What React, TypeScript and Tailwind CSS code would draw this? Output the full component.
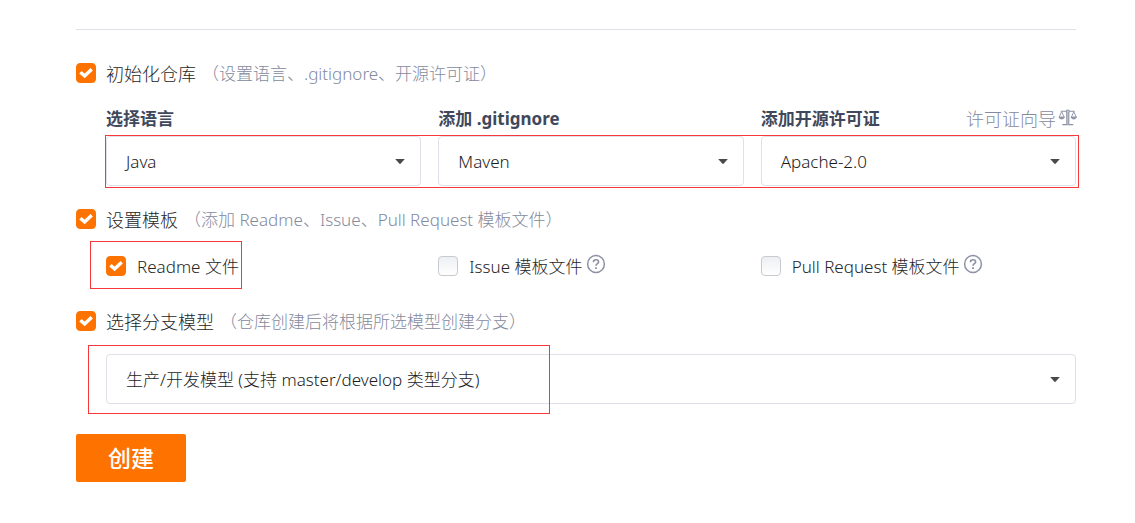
import type { ReactNode } from "react";

function Check({ id, checked = false }: { id: string; checked?: boolean }) {
  return (
    <span className="relative block h-5 w-5 shrink-0">
      <input
        id={id}
        type="checkbox"
        defaultChecked={checked}
        className="peer block h-5 w-5 appearance-none rounded border border-[#c8cad2] bg-linear-to-b from-[#eeeff3] to-white checked:border-[#fe7300] checked:bg-[#fe7300] checked:bg-none"
      />
      <svg viewBox="0 0 20 20" className="pointer-events-none absolute inset-0 hidden h-5 w-5 peer-checked:block" aria-hidden="true">
        <path d="M4.4 9.2L8.6 12.9L15.7 6.2" fill="none" stroke="#fff" strokeWidth="3.4" />
      </svg>
    </span>
  );
}

function SectionTitle({ id, title, hint }: { id: string; title: string; hint: string }) {
  return (
    <div className="flex h-6 items-center">
      <Check id={id} checked />
      <label htmlFor={id} className="ml-[10px] pt-px text-[18px] whitespace-nowrap">
        {title}
      </label>
      <span className="ml-[6px] pt-[2px] whitespace-nowrap text-[#848a9e]">{hint}</span>
    </div>
  );
}

function Picker({ id, label, options }: { id: string; label?: string; options: string[] }) {
  return (
    <div className="relative">
      <select
        id={id}
        aria-label={label}
        className="block h-[50px] w-full appearance-none rounded border border-[#dfe1e9] bg-white pt-[2px] pr-10 pl-4 indent-[3px] text-[#1c1c1c]"
      >
        {options.map((o) => (
          <option key={o}>{o}</option>
        ))}
      </select>
      <svg viewBox="0 0 10 5" className="pointer-events-none absolute top-[23px] right-4 h-[5px] w-[10px]" aria-hidden="true">
        <path d="M0.2 0H9.8L5.8 4.6Q5 5.2 4.2 4.6Z" fill="#4a4a4a" />
      </svg>
    </div>
  );
}

function Columns({ children }: { children: ReactNode }) {
  return (
    <div className="relative grid grid-cols-3 [&>*:nth-child(1)]:pr-2 [&>*:nth-child(2)]:px-[9px] [&>*:nth-child(3)]:pl-2">
      {children}
    </div>
  );
}

function Help() {
  return (
    <svg viewBox="0 0 20 20" className="mb-1 ml-[3px] h-5 w-5 shrink-0" fill="none" stroke="#8c92a4" aria-hidden="true">
      <circle cx="10" cy="10" r="8.4" strokeWidth="1.5" />
      <path d="M7.4 8.2C7.4 6.6 8.6 5.8 10 5.8S12.6 6.7 12.6 8C12.6 9.7 10 9.8 10 11.8" strokeWidth="1.6" />
      <path d="M10 13.2V15" strokeWidth="1.8" />
    </svg>
  );
}

function ScaleIcon() {
  return (
    <svg viewBox="0 0 20 20" className="-mr-[2px] h-5 w-5 shrink-0" fill="none" stroke="#8c92a4" strokeWidth="1.1" aria-hidden="true">
      <path d="M2.8 2.2H8M11.4 2.2H16.6M4.3 15.6H15.3" />
      <path d="M8.8 15.5V3.6A1.5 1.5 0 1 1 10.8 3.6V15.5" fill="#cfd2dc" />
      <path d="M3.6 2.6L1.2 8.2H6.2ZM15.8 2.6L13.3 8.2H18.3Z" strokeWidth="0.9" />
      <path d="M1 8.2C1.3 10.6 6.1 10.6 6.4 8.2ZM13.1 8.2C13.4 10.6 18.2 10.6 18.5 8.2Z" fill="#8c92a4" strokeWidth="0.7" />
    </svg>
  );
}

export default function App() {
  return (
    <form
      onSubmit={(e) => e.preventDefault()}
      className="bg-white pt-[29px] pr-[59px] pb-10 pl-[76px] font-['Noto_Sans','Noto_Sans_CJK_SC',sans-serif] text-[17px] leading-6 font-light text-[#262626]"
    >
      <hr className="border-[#dfe1e6]" />

      <section className="mt-[31px]">
        <SectionTitle id="init" title="初始化仓库" hint="（设置语言、.gitignore、开源许可证）" />
        <div className="mt-[22px] pl-[30px]">
          <Columns>
            <div>
              <label htmlFor="lang" className="mb-[5px] block h-6 font-bold text-[#40485b]">选择语言</label>
              <Picker id="lang" options={["Java"]} />
            </div>
            <div>
              <label htmlFor="ignore" className="mb-[5px] block h-6 font-bold text-[#40485b]">添加 .gitignore</label>
              <Picker id="ignore" options={["Maven"]} />
            </div>
            <div>
              <div className="mb-[5px] flex h-6 justify-between whitespace-nowrap">
                <label htmlFor="license" className="font-bold text-[#40485b]">添加开源许可证</label>
                <a href="#license-guide" className="flex items-center gap-[2px] text-[18px] text-[#848a9e]">
                  许可证向导
                  <ScaleIcon />
                </a>
              </div>
              <Picker id="license" options={["Apache-2.0"]} />
            </div>
            <span className="pointer-events-none absolute -right-[3px] -bottom-[2px] -left-px h-[53px] border border-[#f5393b]" />
          </Columns>
        </div>
      </section>

      <section className="mt-[21px]">
        <SectionTitle id="template" title="设置模板" hint="（添加 Readme、Issue、Pull Request 模板文件）" />
        <div className="mt-[23px] pl-[30px]">
          <Columns>
            <div className="flex h-6">
              <div className="relative flex items-center gap-[11px] whitespace-nowrap">
                <Check id="readme" checked />
                <label htmlFor="readme" className="pt-[2px]">Readme 文件</label>
                <span className="pointer-events-none absolute -top-[13px] -right-[3px] -bottom-[11px] -left-4 border border-[#f5393b]" />
              </div>
            </div>
            <div className="flex h-6 items-center whitespace-nowrap">
              <Check id="issue" />
              <label htmlFor="issue" className="ml-[11px] pt-[2px]">Issue 模板文件</label>
              <Help />
            </div>
            <div className="flex h-6 items-center whitespace-nowrap">
              <Check id="pull" />
              <label htmlFor="pull" className="ml-[11px] pt-[2px]">Pull Request 模板文件</label>
              <Help />
            </div>
          </Columns>
        </div>
      </section>

      <section className="mt-[31px]">
        <SectionTitle id="branch" title="选择分支模型" hint="（仓库创建后将根据所选模型创建分支）" />
        <div className="relative mt-[21px] ml-[30px]">
          <Picker id="model" label="选择分支模型" options={["生产/开发模型 (支持 master/develop 类型分支)"]} />
          <span className="pointer-events-none absolute -top-[9px] -bottom-[10px] -left-[18px] w-[462px] border border-[#f5393b]" />
        </div>
      </section>

      <button type="submit" className="mt-[30px] block h-12 rounded-[2px] bg-[#fe7300] px-8 text-[23px] font-medium text-white">
        创建
      </button>
    </form>
  );
}
